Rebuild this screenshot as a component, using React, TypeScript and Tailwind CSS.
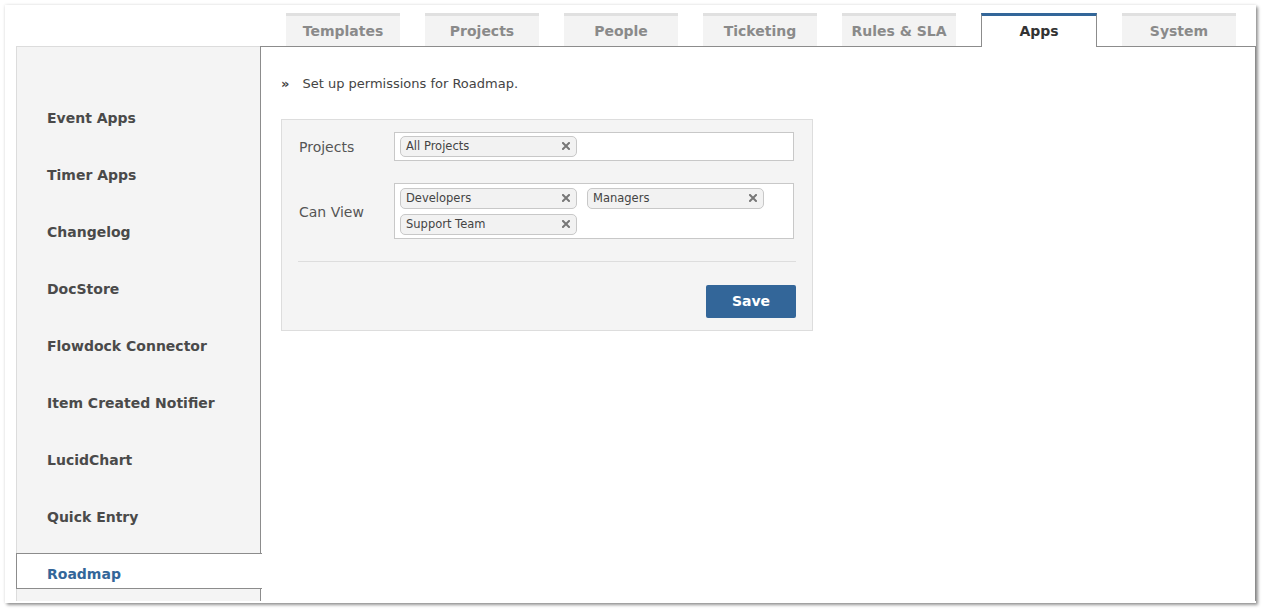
const tabs = ["Templates", "Projects", "People", "Ticketing", "Rules & SLA", "Apps", "System"];
const apps = [
  "Event Apps",
  "Timer Apps",
  "Changelog",
  "DocStore",
  "Flowdock Connector",
  "Item Created Notifier",
  "LucidChart",
  "Quick Entry",
  "Roadmap",
];

const font = { fontFamily: '"DejaVu Sans", Verdana, sans-serif' };

const Chip = ({ label }: { label: string }) => {
  return (
    <div className="flex h-[21px] w-[177px] items-center justify-between rounded-[5px] border border-[#c8c8c8] bg-[#f2f2f2] pl-[5px] pr-[6px] text-[11.5px] text-[#444]">
      <span className="pt-[2px]">{label}</span>
      <svg width="8" height="8" viewBox="0 0 8 8">
        <path d="M1 1 L7 7 M7 1 L1 7" stroke="#777" strokeWidth="2" strokeLinecap="square" />
      </svg>
    </div>
  );
};

export default function App() {
  return (
    <div className="h-[612px] w-[1264px] bg-white pl-[5px] pt-[5px]" style={font}>
      <div className="flex h-[598px] w-[1251px] flex-col bg-white pb-[2px] pl-[11px] shadow-[2px_2px_3px_rgba(0,0,0,0.4),0_0_3px_rgba(0,0,0,0.12)]">
        {/* tabs */}
        <div className="flex h-[41px] items-end gap-[25px] pl-[270px]">
          {tabs.map((t) =>
            t === "Apps" ? (
              <div
                key={t}
                className="relative z-10 -mb-px flex h-[34px] w-[116px] items-center justify-center border-x border-t-[3px] border-x-[#8c8c8c] border-t-[#336699] bg-white pb-px text-[14px] font-bold text-[#333]"
              >
                {t}
              </div>
            ) : (
              <div
                key={t}
                className="flex h-[33px] w-[114px] items-center justify-center border-t-[3px] border-[#e0e0e0] bg-[#f3f3f3] text-[14px] font-bold text-[#8a8a8a]"
              >
                {t}
              </div>
            )
          )}
        </div>

        {/* body */}
        <div className="flex flex-1">
          <div className="flex w-[244px] flex-col gap-[21px] border-l border-t border-[#dcdcdc] bg-[#f4f4f4] pt-[50px]">
            {apps.map((a) =>
              a === "Roadmap" ? (
                <div
                  key={a}
                  className="relative z-10 -ml-px -mr-[2px] flex h-[36px] items-center border-y border-l border-[#8c8c8c] bg-white pl-[30px] pt-[6px] text-[14px] font-bold text-[#336699]"
                >
                  {a}
                </div>
              ) : (
                <div key={a} className="flex h-[36px] items-center pl-[30px] pt-[6px] text-[14px] font-bold text-[#4a4a4a]">
                  {a}
                </div>
              )
            )}
          </div>

          <div className="flex-1 border-x border-t border-[#8c8c8c] pl-[20px] pt-[27px]">
            <div className="flex items-center gap-[13px] text-[13px] text-[#444]">
              <span className="text-[13px] font-bold">»</span>
              <span>Set up permissions for Roadmap.</span>
            </div>

            <div className="mt-[25px] w-[532px] border border-[#dddddd] bg-[#f4f4f4] px-[16px] pb-[12px] pt-[12px]">
              <div className="flex items-center">
                <div className="w-[96px] pl-px pt-[3px] text-[14px] text-[#555]">Projects</div>
                <div className="flex h-[29px] w-[400px] items-center border border-[#c8c8c8] bg-white pl-[5px]">
                  <Chip label="All Projects" />
                </div>
              </div>

              <div className="mt-[22px] flex items-center">
                <div className="w-[96px] pl-px pt-[3px] text-[14px] text-[#555]">Can View</div>
                <div className="flex h-[56px] w-[400px] flex-wrap content-start gap-x-[10px] gap-y-[5px] border border-[#c8c8c8] bg-white pl-[5px] pt-[4px]">
                  <Chip label="Developers" />
                  <Chip label="Managers" />
                  <Chip label="Support Team" />
                </div>
              </div>

              <div className="mt-[22px] h-px w-[498px] bg-[#dddddd]" />

              <div className="mt-[23px] flex w-[498px] justify-end">
                <button className="h-[33px] w-[90px] rounded-[2px] bg-[#336699] pt-px text-[14px] font-bold text-white">
                  Save
                </button>
              </div>
            </div>
          </div>
        </div>
      </div>
    </div>
  );
}
